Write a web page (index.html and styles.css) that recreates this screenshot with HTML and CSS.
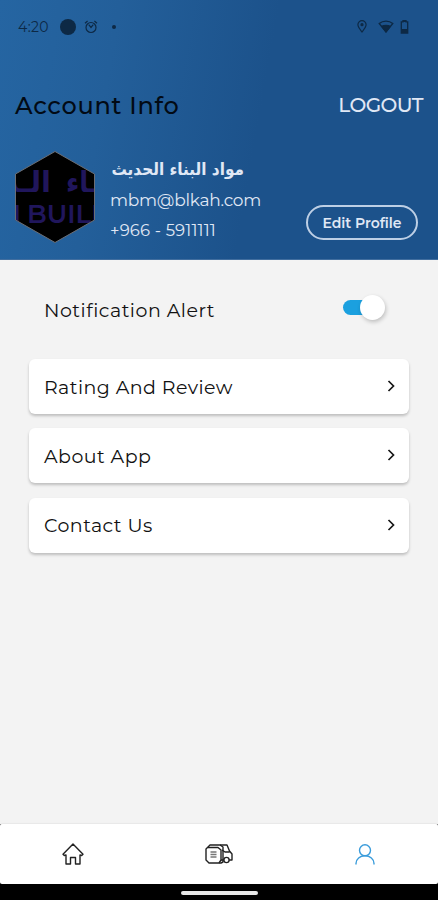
FILE: index.html
```html
<!DOCTYPE html>
<html lang="en">

<head>
	<meta charset="UTF-8">
	<meta name="viewport" content="width=device-width, initial-scale=1.0">
	<title>Account Info</title>
	<link rel="stylesheet" href="styles.css">
</head>

<body>
	<header class="header">
		<!-- Status bar -->
		<div class="status">
			<span class="time">4:20</span>
			<span class="dot"></span>
			<svg class="alarm" width="14" height="14" viewBox="0 0 14 14" fill="none" stroke="currentColor" stroke-width="1.2">
				<circle cx="7" cy="7.5" r="5" />
				<path d="M1 3.2 3.6 1M13 3.2 10.4 1M4.7 4.7 7 7.5l2.3-2.8" />
			</svg>
			<span class="dot small"></span>
			<svg class="pin" width="10" height="13" viewBox="0 0 10 13" fill="none" stroke="currentColor" stroke-width="1.2">
				<path d="M5 12C2.6 9 .9 7 .9 4.8a4.1 4.1 0 0 1 8.2 0C9.1 7 7.4 9 5 12z" />
				<circle cx="5" cy="4.7" r="1" fill="currentColor" />
			</svg>
			<svg class="wifi" width="16" height="13" viewBox="0 0 16 13" fill="none" stroke="currentColor" stroke-width="1.3">
				<path d="M1.2 3.5C5 .3 11 .3 14.8 3.5L8 11.8z" />
				<path d="M3.7 6.4C6 4.9 10 4.9 12.3 6.4L8 12z" fill="currentColor" />
			</svg>
			<svg class="battery" width="9" height="14" viewBox="0 0 9 14">
				<path d="M3 .6h3v1.2h1.7v11.4H1.3V1.8H3z" fill="none" stroke="currentColor" stroke-width="1.3" />
				<path d="M1 9h7v4H1zM3 0h3v2H3z" fill="currentColor" />
			</svg>
		</div>

		<div class="title-row">
			<h1>Account Info</h1>
			<a class="logout">LOGOUT</a>
		</div>

		<!-- Profile -->
		<div class="profile">
			<svg class="avatar" width="82" height="94" viewBox="0 0 82 94">
				<defs>
					<clipPath id="hex">
						<path d="M41 1.5 80.5 24v46L41 92.5 1.5 70V24z" />
					</clipPath>
				</defs>
				<path d="M41 1.5 80.5 24v46L41 92.5 1.5 70V24z" fill="#000" />
				<g clip-path="url(#hex)" class="brand">
					<text x="37" y="42" text-anchor="end" class="brand-ar">الـد</text>
					<text x="52" y="42" class="brand-ar" textLength="32" lengthAdjust="spacingAndGlyphs">ـاء</text>
					<text x="7" y="73" text-anchor="end" class="brand-en">M</text>
					<text x="13" y="73" class="brand-en">BUILD</text>
				</g>
				<path d="M41 1.5 80.5 24v46L41 92.5 1.5 70V24z" fill="none" stroke="#6b6e75" />
			</svg>
			<div class="details">
				<div class="name" lang="ar" dir="rtl">مواد البناء الحديث</div>
				<div class="email">mbm@blkah.com</div>
				<div class="phone">+966 - 5911111</div>
			</div>
			<button class="edit">Edit Profile</button>
		</div>
	</header>

	<main class="content">
		<div class="notification">
			<span>Notification Alert</span>
			<span class="switch"><span class="knob"></span></span>
		</div>
		<div class="card">
			<span>Rating And Review</span>
			<svg width="8" height="12" viewBox="0 0 8 12"><path d="M1.5 1 6.5 6l-5 5" /></svg>
		</div>
		<div class="card">
			<span>About App</span>
			<svg width="8" height="12" viewBox="0 0 8 12"><path d="M1.5 1 6.5 6l-5 5" /></svg>
		</div>
		<div class="card">
			<span>Contact Us</span>
			<svg width="8" height="12" viewBox="0 0 8 12"><path d="M1.5 1 6.5 6l-5 5" /></svg>
		</div>
	</main>

	<!-- Bottom tabs -->
	<nav class="tabs">
		<a class="tab">
			<svg width="22" height="22" viewBox="0 0 22 22">
				<path d="M1 11.2 11 1l10 10.2-1.3 1.3-1.7-.6V21h-4.5v-6.500h-5V21H4v-9.100l-1.700.6z" />
			</svg>
		</a>
		<a class="tab">
			<svg width="28" height="20" viewBox="0 0 28 20">
				<path d="M1 5 5 1h10l3 2v15l-2 1H4l-3-3z" />
				<path d="M3 3.5h10l3 2.5v10l-2 3" />
				<path d="M5.5 8h6M5.5 10.5h6M5.5 13h6" class="lines" />
				<path d="M15 1h7l2.5 6 2.5 3v6h-3M16 16h3M17 6l3 2h4.5" />
				<circle cx="21.5" cy="16" r="2.6" fill="#fff" />
			</svg>
		</a>
		<a class="tab active">
			<svg width="20" height="21" viewBox="0 0 20 21">
				<circle cx="10" cy="6.3" r="5.5" />
				<path d="M1 20.5v-1c0-4.500 4-7.700 9-7.700s9 3.200 9 7.700v1" />
			</svg>
		</a>
	</nav>
	<footer class="system-bar">
		<span class="handle"></span>
	</footer>
</body>

</html>
```

FILE: styles.css
```css
* {
	box-sizing: border-box;
}

body {
	margin: 0;
	height: 900px;
	display: flex;
	flex-direction: column;
	overflow: hidden;
	background: #000;
	color: #111;
	font-family: Montserrat, Inter, "DejaVu Sans", sans-serif;
}

.header {
	height: 260px;
	background: linear-gradient(100deg, #2565a2 0%, #235f9a 25%, #1c528b 58%, #1c528b 100%);
	border-bottom: 1px solid #416e9f;
	color: #e0e8f5;
}

/* Status bar */
.status {
	display: flex;
	align-items: center;
	height: 53px;
	padding: 0 29px 0 18px;
	color: #0d2945;
}

.time {
	width: 42px;
	font-size: 14px;
	letter-spacing: 0.3px;
}

.dot {
	width: 16px;
	height: 16px;
	border-radius: 50%;
	background: #0d2945;
}

.dot.small {
	width: 4px;
	height: 4px;
	margin-left: 14px;
}

.alarm {
	margin-left: 8px;
}

.pin {
	margin-left: auto;
}

.wifi {
	margin-left: 11px;
}

.battery {
	margin-left: 6px;
}

.title-row {
	display: flex;
	align-items: center;
	justify-content: space-between;
	height: 97px;
	padding: 0 15px;
}

h1 {
	margin: 7px 0 0;
	color: #020a14;
	font-size: 24px;
	font-weight: 500;
	letter-spacing: 0.7px;
}

.logout {
	margin-top: 6px;
	font-size: 20px;
	font-weight: 500;
	letter-spacing: -0.55px;
}

/* Profile */
.profile {
	display: flex;
	padding: 0 20px 0 14px;
}

.details {
	flex: 1;
	margin: 4px 0 0 14px;
	font-size: 17px;
	white-space: nowrap;
}

.name {
	width: 134px;
	height: 30px;
	line-height: 30px;
	font-family: "DejaVu Sans Condensed", "DejaVu Sans", sans-serif;
	font-stretch: condensed;
	font-size: 17px;
	font-weight: bold;
}

.email {
	height: 30px;
	line-height: 33px;
	letter-spacing: -0.25px;
}

.phone {
	height: 30px;
	line-height: 32px;
	font-size: 16.5px;
	letter-spacing: 0.15px;
}

.edit {
	align-self: flex-start;
	width: 112px;
	height: 35px;
	margin-top: 55px;
	padding: 0;
	border: 2px solid #bdcfe5;
	border-radius: 18px;
	background: none;
	color: #e0e8f5;
	font-family: inherit;
	font-size: 14px;
	font-weight: 600;
	letter-spacing: -0.05px;
}

.brand {
	fill: #20165c;
}

.brand-ar {
	font-family: "DejaVu Sans", sans-serif;
	font-size: 29px;
	font-weight: bold;
}

.brand-en {
	font-size: 26px;
	font-weight: 600;
}

/* Content */
.content {
	flex: 1;
	padding: 0 29px;
	background: #f3f3f3;
	font-size: 19px;
}

.notification {
	display: flex;
	align-items: center;
	justify-content: space-between;
	height: 99px;
	padding: 2px 24px 0 15px;
	letter-spacing: 0.5px;
}

.switch {
	display: flex;
	align-items: center;
	justify-content: flex-end;
	width: 42px;
	height: 15px;
	margin-top: -7px;
	border-radius: 8px;
	background: linear-gradient(90deg, #1ba0df 30px, transparent 30px);
}

.knob {
	width: 25px;
	height: 25px;
	flex: none;
	border-radius: 50%;
	background: #fff;
	box-shadow: 1px 2px 4px rgba(0, 0, 0, 0.22);
}

.card {
	display: flex;
	align-items: center;
	justify-content: space-between;
	height: 55px;
	margin-bottom: 14.4px;
	padding: 1px 14px 0 15px;
	border-radius: 6px;
	background: #fff;
	box-shadow: 0 2px 3px rgba(0, 0, 0, 0.22);
	letter-spacing: 0.45px;
}

.card svg {
	margin-top: -2px;
}

.card path {
	fill: none;
	stroke: #161616;
	stroke-width: 1.7;
}

/* Bottom tabs */
.tabs {
	display: flex;
	height: 60px;
	border-radius: 3px 3px 2px 2px;
	background: #fff;
	box-shadow: 0 -1px 1px #e8e8e8;
}

.tab {
	display: flex;
	flex: 1;
	align-items: center;
	justify-content: center;
}

.tab svg {
	fill: none;
	stroke: #222;
	stroke-width: 1.4;
	stroke-linejoin: round;
}

.tab .lines {
	stroke: #777;
}

.tab.active svg {
	stroke: #3a9cdb;
}

.system-bar {
	display: flex;
	justify-content: center;
	height: 16px;
	padding-top: 7px;
}

.handle {
	width: 77px;
	height: 4px;
	border-radius: 2px;
	background: #e8e8e8;
}
```
